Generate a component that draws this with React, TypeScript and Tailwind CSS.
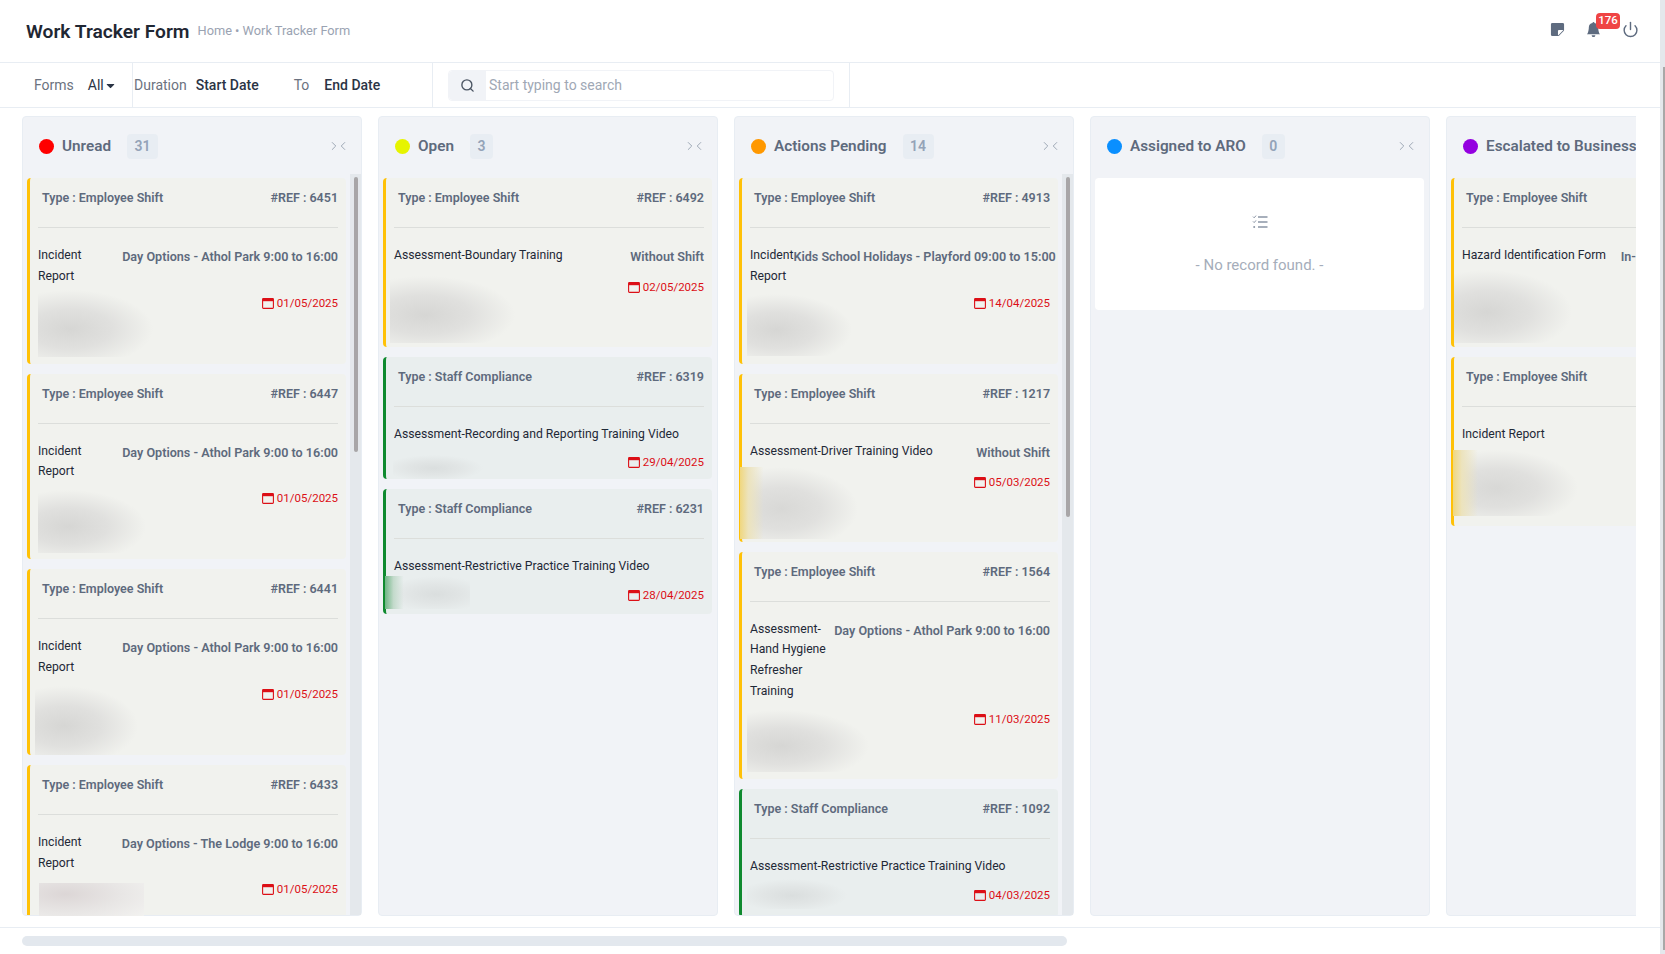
import React from "react";
import { Power, Search, ChevronLeft, ChevronRight } from "lucide-react";
import { BsStickyFill, BsBellFill } from "react-icons/bs";
import { FaCaretDown } from "react-icons/fa";

type CardInfo = {
  kind: "shift" | "staff";
  ref: string;
  title: string;
  titleClass?: string;
  sub?: string;
  date?: string;
  rowClass: string;
  blurClass: string;
  dateClass?: string;
};

type ColumnInfo = {
  name: string;
  count: number;
  dot: string;
  badgeClass: string;
  thumbClass?: string;
  cards: CardInfo[];
};

const shiftHaze =
  "bg-[radial-gradient(ellipse_farthest-side_at_28%_58%,#d6d6d4_0%,#e0e0de_50%,#f1f2ee_100%)]";
const staffHaze =
  "bg-[radial-gradient(ellipse_farthest-side_at_45%_55%,#dadede_0%,#e1e5e5_50%,#e9eeee_100%)]";
const shiftEdge =
  "bg-[linear-gradient(90deg,#f0d77e_0%,#ece3bd_7%,transparent_20%),radial-gradient(ellipse_farthest-side_at_35%_58%,#d8d8d6_0%,#e0e0de_50%,#f1f2ee_100%)]";
const staffEdge =
  "bg-[linear-gradient(90deg,#6fb585_0%,#c3dacb_10%,transparent_22%),radial-gradient(ellipse_farthest-side_at_60%_55%,#dadede_0%,#e1e5e5_50%,#e9eeee_100%)]";

const athol = "Day Options - Athol Park 9:00 to 16:00";
const incident = "max-w-[70px]";

const columns: ColumnInfo[] = [
  {
    name: "Unread",
    count: 31,
    dot: "bg-[#ff0000]",
    badgeClass: "w-[31px]",
    thumbClass: "h-[275px]",
    cards: [
      { kind: "shift", ref: "6451", title: "Incident Report", titleClass: incident, sub: athol, date: "01/05/2025", rowClass: "mt-[3px] h-[74px]", blurClass: `h-[67px] w-[115px] ${shiftHaze}`, dateClass: "mt-[3px]" },
      { kind: "shift", ref: "6447", title: "Incident Report", titleClass: incident, sub: athol, date: "01/05/2025", rowClass: "mt-[3px] h-[74px]", blurClass: `mt-[5px] h-[63px] w-[108px] ${shiftHaze}`, dateClass: "mt-[3px]" },
      { kind: "shift", ref: "6441", title: "Incident Report", titleClass: incident, sub: athol, date: "01/05/2025", rowClass: "mt-[3px] h-[74px]", blurClass: `-ml-[3px] mt-[5px] h-[69px] w-[103px] ${shiftHaze}`, dateClass: "mt-[3px]" },
      { kind: "shift", ref: "6433", title: "Incident Report", titleClass: incident, sub: "Day Options - The Lodge 9:00 to 16:00", date: "01/05/2025", rowClass: "mt-[3px] h-[74px]", blurClass: "h-0 w-0", dateClass: "mt-[3px]" },
    ],
  },
  {
    name: "Open",
    count: 3,
    dot: "bg-[#e6f400]",
    badgeClass: "w-[23px]",
    cards: [
      { kind: "shift", ref: "6492", title: "Assessment-Boundary Training", sub: "Without Shift", date: "02/05/2025", rowClass: "mt-[9px] h-[71px]", blurClass: `-ml-[4px] h-[67px] w-[125px] ${shiftHaze}`, dateClass: "mt-[1px]" },
      { kind: "staff", ref: "6319", title: "Assessment-Recording and Reporting Training Video", date: "29/04/2025", rowClass: "mt-[10px] h-[24px]", blurClass: `-ml-[1px] h-[24px] w-[90px] ${staffHaze}`, dateClass: "-mt-[3px]" },
      { kind: "staff", ref: "6231", title: "Assessment-Restrictive Practice Training Video", date: "28/04/2025", rowClass: "-mt-[1px] h-[38px]", blurClass: `-ml-[9px] h-[33px] w-[85px] ${staffEdge}`, dateClass: "mt-[9px]" },
    ],
  },
  {
    name: "Actions Pending",
    count: 14,
    dot: "bg-[#ff9800]",
    badgeClass: "w-[31px]",
    thumbClass: "h-[340px]",
    cards: [
      { kind: "shift", ref: "4913", title: "Incident Report", titleClass: incident, sub: "Kids School Holidays - Playford 09:00 to 15:00", date: "14/04/2025", rowClass: "mt-[3px] h-[74px]", blurClass: `-ml-[3px] mt-[4px] h-[62px] w-[105px] ${shiftHaze}`, dateClass: "mt-[3px]" },
      { kind: "shift", ref: "1217", title: "Assessment-Driver Training Video", sub: "Without Shift", date: "05/03/2025", rowClass: "mt-[4px] h-[75px]", blurClass: `-ml-[10px] h-[72px] w-[118px] ${shiftEdge}`, dateClass: "mt-[5px]" },
      { kind: "shift", ref: "1564", title: "Assessment-Hand Hygiene Refresher Training", sub: athol, date: "11/03/2025", rowClass: "mt-[8px] h-[69px]", blurClass: `-ml-[3px] h-[62px] w-[122px] ${shiftHaze}`, dateClass: "-mt-[1px]" },
      { kind: "staff", ref: "1092", title: "Assessment-Restrictive Practice Training Video", date: "04/03/2025", rowClass: "mt-[2px] h-[38px]", blurClass: `-ml-[3px] h-[30px] w-[100px] ${staffHaze}`, dateClass: "mt-[6px]" },
    ],
  },
  {
    name: "Assigned to ARO",
    count: 0,
    dot: "bg-[#0a8fff]",
    badgeClass: "w-[23px]",
    cards: [],
  },
  {
    name: "Escalated to Business",
    count: 4,
    dot: "bg-[#9400e0]",
    badgeClass: "w-[23px]",
    cards: [
      { kind: "shift", ref: "6320", title: "Hazard Identification Form", sub: "In-Home Support Day Shift", rowClass: "mt-[3px] h-[77px]", blurClass: `-ml-[8px] h-[73px] w-[118px] ${shiftHaze}` },
      { kind: "shift", ref: "6102", title: "Incident Report", rowClass: "mt-[5px] h-[76px]", blurClass: `-ml-[9px] h-[66px] w-[125px] ${shiftEdge}` },
    ],
  },
];

const CalendarIcon = () => (
  <svg width="12" height="12" viewBox="0 0 12 12" fill="none" className="shrink-0">
    <rect x="0.6" y="1.6" width="10.8" height="9.8" rx="0.8" stroke="#dc0f16" strokeWidth="1.1" />
    <rect x="0.6" y="1.6" width="10.8" height="2.6" fill="#dc0f16" />
  </svg>
);

const EmptyListIcon = () => (
  <svg width="16" height="14" viewBox="0 0 16 14" fill="none" stroke="#8b95a5">
    <path d="M1 1.6l1.2 1.2L4 .6M1 6.4l1.2 1.2L4 5.4" strokeWidth="1" />
    <circle cx="2.2" cy="12" r="1" fill="#8b95a5" stroke="none" />
    <path d="M6 2h9.5M6 7h9.5M6 12h9.5" strokeWidth="1.6" />
  </svg>
);

const Card = ({ card }: { card: CardInfo }) => {
  const staff = card.kind === "staff";
  return (
    <div
      className={`shrink-0 rounded border-l-[3px] ${
        staff ? "border-[#0f8a2f] bg-[#e9eeee]" : "border-[#ffc107] bg-[#f1f2ee]"
      }`}
    >
      <div className="flex h-[49px] flex-col pl-[12px] pr-[8px] pt-[10px]">
        <div className="flex justify-between whitespace-nowrap text-[12.5px] font-semibold leading-[20px] text-[#5e6a7d]">
          <span>Type : {staff ? "Staff Compliance" : "Employee Shift"}</span>
          <span>#REF : {card.ref}</span>
        </div>
      </div>
      <div className="ml-[8px] mr-[8px] border-t border-[#dcdedb]" />
      <div className="pl-[8px] pr-[8px] pt-[17px]">
        <div className="flex justify-between gap-0">
          <div className={`text-[12.2px] leading-[20.8px] text-[#1f2937] ${card.titleClass ?? ""}`}>{card.title}</div>
          {card.sub && (
            <div className="mt-[2px] shrink-0 whitespace-nowrap text-[12.6px] font-semibold leading-[20px] text-[#5e6a7d]">
              {card.sub}
            </div>
          )}
        </div>
        <div className={`flex items-start justify-between ${card.rowClass}`}>
          <div className={card.blurClass} />
          {card.date && (
            <div className={`flex items-center gap-[3px] text-[11.5px] leading-[20px] text-[#dc0f16] ${card.dateClass}`}>
              <CalendarIcon />
              {card.date}
            </div>
          )}
        </div>
      </div>
    </div>
  );
};

const Column = ({ column }: { column: ColumnInfo }) => {
  const wide = !column.thumbClass;
  return (
    <div className="relative flex h-[800px] w-[340px] shrink-0 flex-col rounded border border-[#e8edf3] bg-[#f1f3f7]">
      <div className="flex h-[57px] shrink-0 items-center pl-[16px] pr-[11px] pt-[1px]">
        <span className={`h-[15px] w-[15px] shrink-0 rounded-full ${column.dot}`} />
        <span className="ml-[8px] whitespace-nowrap text-[15.3px] font-semibold text-[#5e6a7d]">{column.name}</span>
        <span className={`ml-[16px] flex h-[25px] items-center justify-center rounded bg-[#e8edf3] text-[14px] font-semibold text-[#94a3b8] ${column.badgeClass}`}>
          {column.count}
        </span>
        <span className="ml-auto flex items-center text-[#98a2b0]">
          <ChevronRight size={14} strokeWidth={1.6} />
          <ChevronLeft size={14} strokeWidth={1.6} className="-ml-[5px]" />
        </span>
      </div>
      <div className="flex min-h-0 flex-1">
        <div
          className={`ml-[4px] flex flex-col gap-[10px] overflow-hidden pt-[4px] ${
            wide ? "w-[329px]" : "w-[320px]"
          }`}
        >
          {column.cards.map((card) => (
            <Card key={card.ref} card={card} />
          ))}
          {column.cards.length === 0 && (
            <div className="flex h-[132px] w-[329px] shrink-0 flex-col items-center rounded bg-white pt-[37px]">
              <EmptyListIcon />
              <div className="mt-[25px] text-[15px] text-[#a5adba]">- No record found. -</div>
            </div>
          )}
        </div>
        {column.thumbClass && (
          <div className="ml-[4px] flex w-[11px] justify-center bg-[#e4e8ec] pt-[3px]">
            <div className={`w-[4px] rounded-full bg-[#a8a6a8] ${column.thumbClass}`} />
          </div>
        )}
      </div>
      {column.name === "Unread" && (
        <div className="absolute left-[16px] top-[766px] h-[37px] w-[105px] bg-[radial-gradient(ellipse_at_25%_30%,#dcd6d6_0%,#e8e6e5_50%,#f4f4f2_100%)]" />
      )}
    </div>
  );
};

export default function App() {
  return (
    <div className="flex h-[954px] w-[1665px] overflow-hidden bg-white font-['Roboto','Noto_Sans',sans-serif]">
      <div className="flex w-[1660px] flex-col">
        <div className="flex h-[63px] shrink-0 items-center border-b border-[#e8edf3] pl-[26px]">
          <h1 className="whitespace-nowrap pt-[2px] text-[19.2px] font-semibold text-[#1f2733]">Work Tracker Form</h1>
          <span className="ml-[8px] whitespace-nowrap text-[12.8px] text-[#9aa3b2]">Home • Work Tracker Form</span>
          <div className="relative ml-auto mr-[21px] -mt-[3px] flex items-center text-[#5e6b7f]">
            <BsStickyFill size={15} />
            <BsBellFill size={15} className="ml-[21px]" />
            <Power size={17} strokeWidth={2} className="ml-[21px]" />
            <span className="absolute -top-[8px] left-[46px] flex h-[16px] w-[24px] items-center justify-center rounded bg-[#ef4444] text-[11.5px] font-medium text-white">
              176
            </span>
          </div>
        </div>

        <div className="flex h-[45px] shrink-0 items-center border-b border-[#e8edf3] text-[14px]">
          <div className="flex h-full w-[133px] items-center border-r border-[#e8edf3] pl-[34px]">
            <span className="text-[#6b7280]">Forms</span>
            <span className="ml-[14px] text-[#2b3445]">All</span>
            <FaCaretDown size={13} className="text-[#2b3445]" />
          </div>
          <div className="flex h-full w-[300px] items-center border-r border-[#e8edf3] pl-[1px]">
            <span className="text-[#6b7280]">Duration</span>
            <span className="ml-[9px] font-medium text-[#2b3445]">Start Date</span>
            <span className="ml-[35px] text-[#6b7280]">To</span>
            <span className="ml-[15px] font-medium text-[#2b3445]">End Date</span>
          </div>
          <div className="flex h-full w-[417px] items-center border-r border-[#e8edf3] pl-[15px]">
            <div className="flex h-[31px] w-[386px] items-center rounded border border-[#f1f3f7]">
              <div className="flex h-full w-[37px] items-center justify-center rounded-l bg-[#f1f3f7] text-[#4b5563]">
                <Search size={15} strokeWidth={2.2} />
              </div>
              <span className="ml-[3px] text-[#a0a8b5]">Start typing to search</span>
            </div>
          </div>
        </div>

        <div className="ml-[22px] mt-[8px] flex w-[1614px] shrink-0 gap-[16px] overflow-hidden">
          {columns.map((column) => (
            <Column key={column.name} column={column} />
          ))}
        </div>

        <div className="mt-[11px] flex-1 border-t border-[#e8edf3] pl-[22px] pt-[8px]">
          <div className="h-[10px] w-[1045px] rounded-full bg-[#e3e8ee]" />
        </div>
      </div>
      <div className="flex w-[5px] justify-end bg-[#e4e8ec] pb-[4px] pt-[67px]">
        <div className="h-full w-[2px] bg-[#a8a8a8]" />
      </div>
    </div>
  );
}
